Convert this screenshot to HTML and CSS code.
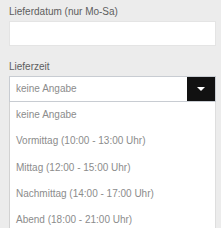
FILE: index.html
```html
<!DOCTYPE html>
<html lang="de">
<head>
    <meta charset="UTF-8">
    <title>Lieferung</title>
    <link rel="stylesheet" href="styles.css">
</head>
<body>
    <div class="form">
        <div class="field">
            <div class="label">Lieferdatum (nur Mo-Sa)</div>
            <div class="input"></div>
        </div>

        <div class="field">
            <div class="label">Lieferzeit</div>
            <div class="select">
                <div class="select-value">keine Angabe</div>
                <div class="select-button">
                    <svg width="8" height="4" viewBox="0 0 8 4"><path d="M0 0h8L4 4z" fill="#fff"/></svg>
                </div>
            </div>
            <ul class="options">
                <li>keine Angabe</li>
                <li>Vormittag (10:00 - 13:00 Uhr)</li>
                <li>Mittag (12:00 - 15:00 Uhr)</li>
                <li>Nachmittag (14:00 - 17:00 Uhr)</li>
                <li>Abend (18:00 - 21:00 Uhr)</li>
            </ul>
        </div>
    </div>
</body>
</html>
```

FILE: styles.css
```css
* {
    margin: 0;
    padding: 0;
    box-sizing: border-box;
}

body {
    font-family: "Liberation Sans", Arial, sans-serif;
    font-size: 10px;
    background: #ececec;
    overflow: hidden;
}

.form {
    padding: 6px 5px 0 9px;
}

.field {
    margin-bottom: 15px;
}

.label {
    color: #5e5e5e;
    line-height: 12px;
    margin-bottom: 3px;
}

.input {
    height: 25px;
    background: #fff;
    border: 1px solid #e4e4e4;
}

.select {
    display: flex;
    height: 26px;
    background: #fff;
    border: 1px solid #c8ccd2;
}

.select-value {
    flex: 1;
    color: #8c8c8c;
    padding-left: 6px;
    line-height: 24px;
}

.select-button {
    width: 28px;
    background: #111;
    display: flex;
    align-items: center;
    justify-content: center;
}

.options {
    list-style: none;
    background: #fff;
    border-left: 1px solid #d2d2d2;
    border-right: 1px solid #dedede;
}

.options li {
    color: #8c8c8c;
    padding-left: 6px;
    line-height: 26.3px;
}
```
